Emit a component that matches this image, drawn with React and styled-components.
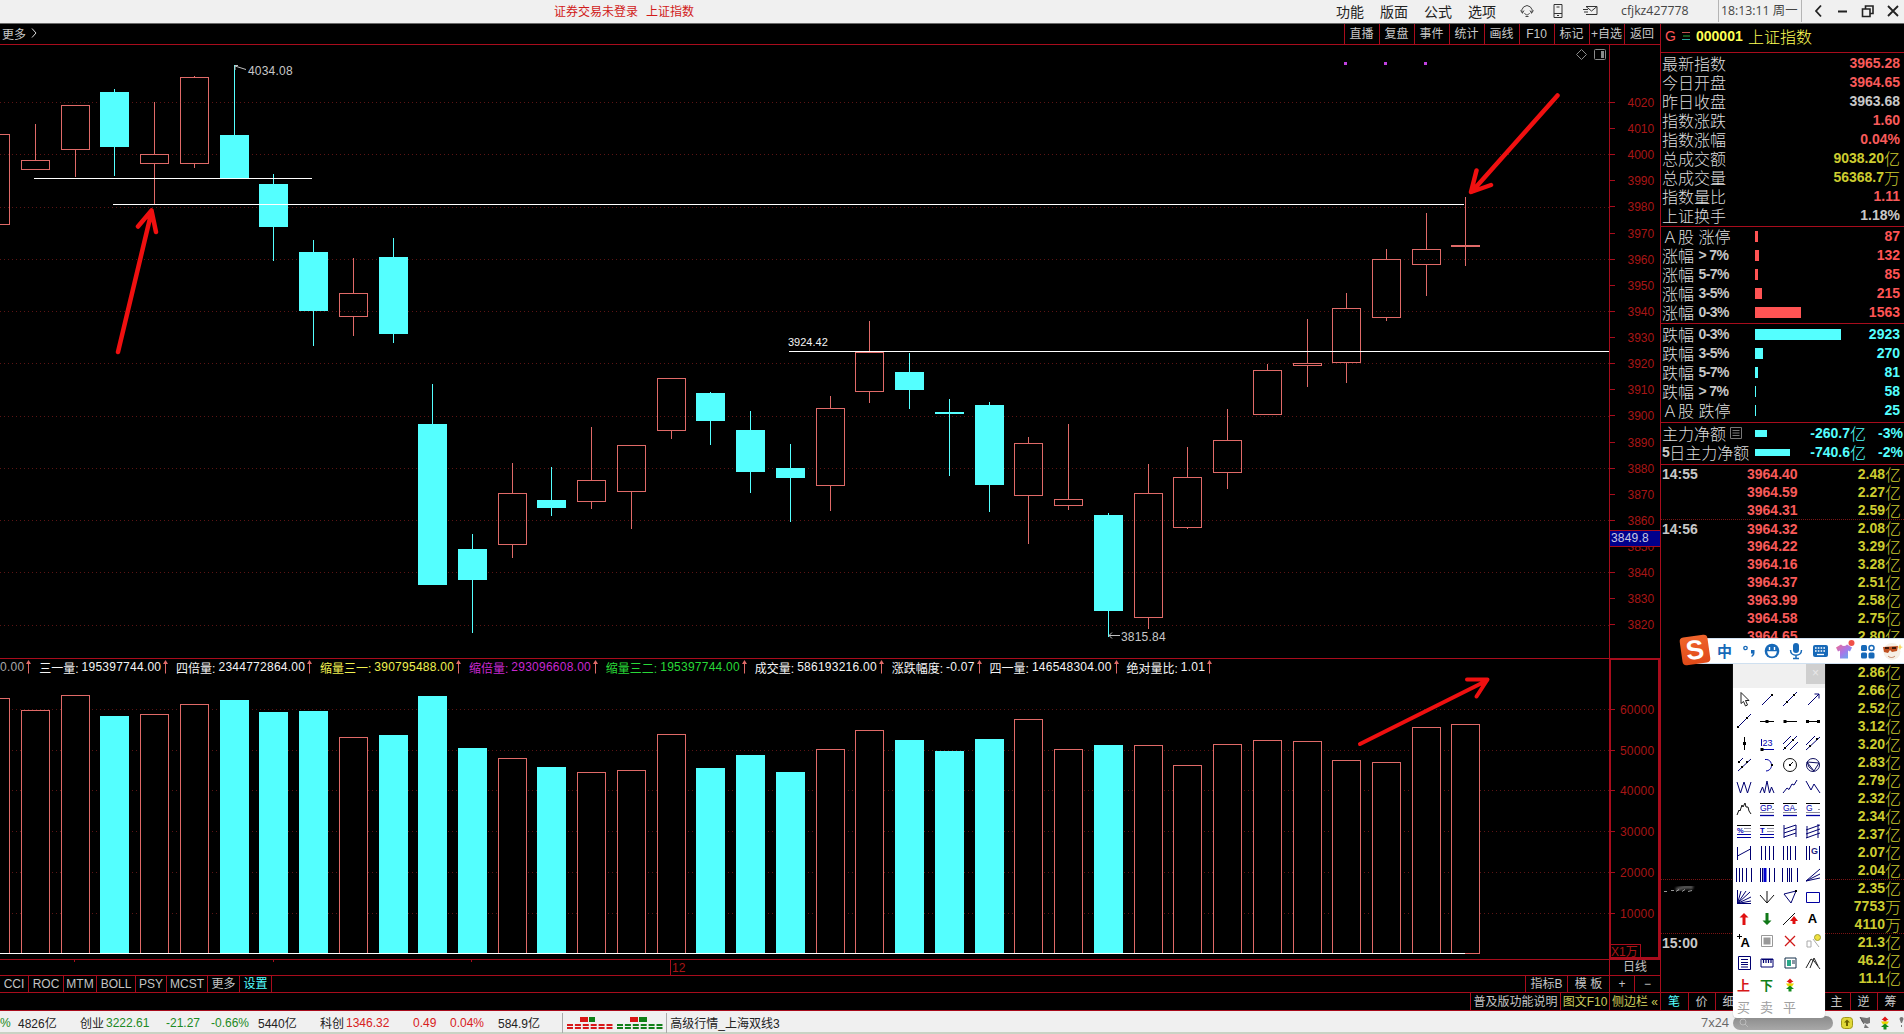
import React from "react";
import styled, { createGlobalStyle } from "styled-components";

const LINE = "#a80c1c";
const UP = "#e06a68";
const CYAN = "#54ffff";
const AXIS = "#a81616";

const GlobalStyle = createGlobalStyle`
  * {
    box-sizing: border-box;
  }
  body {
    margin: 0;
    background: #000;
    overflow: hidden;
    font-family: "Liberation Sans", "Noto Sans CJK SC", sans-serif;
    font-size: 12px;
  }
  svg {
    display: block;
    flex: none;
  }
`;

const Page = styled.div`
  width: 1904px;
  height: 1034px;
  display: flex;
  flex-direction: column;
  position: relative;
  color: #c8c8c8;
  white-space: nowrap;
  overflow: hidden;
`;

/* ---------- title bar ---------- */

const TitleBar = styled.header`
  height: 24px;
  padding-bottom: 2px;
  display: flex;
  align-items: center;
  background: #f0f0f0;
  border-bottom: 1px solid #6a6a6a;
  color: #222;
`;

const Notice = styled.div`
  width: 1336px;
  padding-left: 554px;
  display: flex;
  gap: 8px;
  color: #d01a1a;
`;

const Menu = styled.nav`
  width: 184px;
  display: flex;
  gap: 16px;
  font-size: 14px;
`;

const TitleIcons = styled.div`
  width: 101px;
  display: flex;
  align-items: center;
  gap: 19px;
`;

const Account = styled.div`
  width: 97px;
  font-family: "Open Sans", sans-serif;
  font-size: 12.3px;
  color: #444;
`;

const Clock = styled.div`
  width: 84px;
  height: 22px;
  line-height: 22px;
  padding-left: 2px;
  border-left: 1px solid #b4b4b4;
  border-right: 1px solid #b4b4b4;
  font-family: "Open Sans", "Noto Sans CJK SC", sans-serif;
  font-size: 12.3px;
  color: #444;
`;

/* ---------- left side ---------- */

const Main = styled.main`
  height: 987px;
  display: flex;
`;

const ChartColumn = styled.section`
  width: 1660px;
  display: flex;
  flex-direction: column;
`;

const ToolRow = styled.div`
  height: 21px;
  display: flex;
  align-items: center;
  justify-content: space-between;
  padding-left: 2px;
  border-bottom: 1px solid ${LINE};
`;

const More = styled.div`
  padding-bottom: 2px;
  display: flex;
  align-items: center;
  gap: 5px;
`;

const ToolTabs = styled.div`
  display: flex;
`;

const ToolTab = styled.div`
  width: ${(p) => p.$w || 35}px;
  height: 20px;
  line-height: 20px;
  padding-right: 1px;
  border-left: 1px solid ${LINE};
  text-align: center;
`;

const VolumePanel = styled.div`
  height: 301px;
  display: flex;
  border-top: 1px solid ${LINE};
`;

const VolumeMain = styled.div`
  width: 1609px;
  overflow: hidden;
`;

const Legend = styled.div`
  height: 18px;
  padding-bottom: 2px;
  display: flex;
  align-items: center;
`;

const LegendItem = styled.div`
  display: flex;
  align-items: center;
  color: ${(p) => p.$c || "#f4f4f4"};
`;

const LegendLabel = styled.span`
  width: ${(p) => p.$w}px;
`;

const LegendValue = styled.span`
  letter-spacing: 0.25px;
  margin-right: 2px;
`;

const LegendArrow = styled.svg`
  margin-right: 7.8px;
`;

const BottomRow = styled.div`
  height: ${(p) => p.$h}px;
  display: flex;
  border-top: 1px solid ${LINE};
  border-bottom: ${(p) => (p.$last ? `1px solid ${LINE}` : "none")};
  line-height: ${(p) => p.$h - 1}px;
`;

const Spacer = styled.div`
  flex: 1;
`;

const Cell = styled.div`
  width: ${(p) => p.$w}px;
  text-align: center;
  color: ${(p) => p.$c || "#c4c4c4"};
  border-left: ${(p) => (p.$l ? `1px solid ${LINE}` : "none")};
  border-right: ${(p) => (p.$r ? `1px solid ${LINE}` : "none")};
`;

/* ---------- quote sidebar ---------- */

const Sidebar = styled.aside`
  width: 244px;
  border-left: 1px solid ${LINE};
  display: flex;
  flex-direction: column;
`;

const QuoteTitle = styled.div`
  height: 29px;
  padding: 0 0 4px 4px;
  display: flex;
  align-items: center;
  border-bottom: 1px solid ${LINE};
  color: #ffff54;
  font-size: 16px;
  font-weight: 300;
`;

const GMark = styled.span`
  width: 17px;
  color: #ff5454;
  font-weight: 400;
  font-size: 14px;
`;

const Code = styled.span`
  width: 52px;
  padding-left: 6px;
  margin-right: 6px;
  font-size: 14px;
  font-weight: 700;
`;

const Section = styled.div`
  padding: ${(p) => p.$pad || "0"};
  border-bottom: 1px solid ${LINE};
`;

const Row = styled.div`
  height: 19px;
  padding: 0 4px 0 1px;
  display: flex;
  align-items: center;
`;

const Label = styled.div`
  width: 93px;
  padding-bottom: 1px;
  display: flex;
  align-items: center;
  font-size: 16px;
  font-weight: 300;
  color: #dedede;
  b {
    font-size: 14px;
    font-weight: 700;
    letter-spacing: -0.6px;
    color: #c8c8c8;
  }
`;

const Value = styled.div`
  margin-left: auto;
  padding-bottom: 1px;
  display: flex;
  align-items: center;
  justify-content: flex-end;
  font-size: 14px;
  font-weight: 700;
  color: ${(p) => p.$c};
  i {
    font-size: 16px;
    font-style: normal;
    font-weight: 300;
  }
`;

const Bar = styled.div`
  height: ${(p) => p.$h || 11}px;
  background: ${(p) => p.$c};
`;

const PercentCell = styled.div`
  width: 37px;
  margin-right: -3px;
  padding-bottom: 1px;
  text-align: right;
  font-size: 14px;
  font-weight: 700;
  color: ${CYAN};
`;

const Ticks = styled.div`
  flex: 1;
  overflow: hidden;
`;

const Tick = styled.div`
  height: 18px;
  padding: 0 3px 0 1px;
  display: flex;
  align-items: center;
  border-top: ${(p) => (p.$line ? "1px dotted #7a1414" : "none")};
`;

const Time = styled.div`
  width: 85px;
  font-size: 14px;
  font-weight: 700;
  color: #c8c8c8;
`;

const Price = styled.div`
  font-size: 14px;
  font-weight: 700;
  color: #f85a5a;
`;

const SideTabs = styled.div`
  height: 19px;
  display: flex;
  border-top: 1px solid ${LINE};
  border-bottom: 1px solid ${LINE};
`;

const SideTab = styled.div`
  width: 27px;
  line-height: 18px;
  padding-right: 1px;
  text-align: center;
  color: ${(p) => (p.$on ? CYAN : "#c8c8c8")};
  border-left: ${(p) => (p.$first ? "none" : `1px solid ${LINE}`)};
`;

/* ---------- status bar ---------- */

const StatusBar = styled.footer`
  height: 23px;
  padding-top: 2px;
  display: flex;
  align-items: center;
  background: #f0f0f0;
  border-bottom: 2px solid #c9d3c4;
  color: #222;
`;

const Stat = styled.span`
  width: ${(p) => p.$w}px;
  color: ${(p) => p.$c || "#222"};
`;

const Strength = styled.div`
  width: 105px;
  height: 20px;
  padding: 3px 0 0 3px;
  border-left: 1px solid #aaa;
  border-right: 1px solid #aaa;
`;

const Scope = styled.span`
  width: 32px;
  font-family: "Open Sans", sans-serif;
  font-size: 12.5px;
  color: #666;
`;

const Search = styled.div`
  width: 100px;
  height: 14px;
  margin-right: 8px;
  padding-left: 6px;
  display: flex;
  align-items: center;
  border-radius: 7px;
  background: linear-gradient(#8a8a8a, #a8a8a8);
`;

const Tray = styled.div`
  display: flex;
  align-items: center;
  gap: 6px;
`;

/* ---------- floating windows ---------- */

const ImeBar = styled.div`
  position: absolute;
  left: 1690px;
  top: 638px;
  width: 214px;
  height: 26px;
  padding-left: 26px;
  display: flex;
  align-items: center;
  background: #fff;
  border: 1px solid #cfe0f0;
  border-right: none;
  color: #1769b8;
`;

const ImeLogo = styled.div`
  position: absolute;
  left: -10px;
  top: -3px;
  width: 28px;
  height: 28px;
  line-height: 28px;
  border-radius: 4px;
  transform: rotate(-8deg);
  background: linear-gradient(#f0642c, #e04a18);
  color: #fff;
  font-size: 27px;
  font-weight: 700;
  text-align: center;
`;

const ImeMode = styled.span`
  width: 26px;
  padding-bottom: 2px;
  font-size: 15px;
  font-weight: 700;
`;

const Palette = styled.div`
  position: absolute;
  left: 1733px;
  top: 664px;
  width: 92px;
  height: 354px;
  background: #fff;
  border-radius: 0 0 4px 4px;
  box-shadow: 0 0 1px #999;
`;

const PaletteHead = styled.div`
  height: 24px;
  display: flex;
  justify-content: flex-end;
  background: #f0f0f0;
`;

const PaletteClose = styled.div`
  width: 19px;
  height: 20px;
  line-height: 19px;
  background: #cfcfcf;
  color: #e8e8e8;
  text-align: center;
`;

const PaletteGrid = styled.div`
  display: grid;
  grid-template-columns: repeat(4, 23px);
  grid-auto-rows: 22px;
`;

const Tool = styled.div`
  padding: 0 2px 1px 0;
  display: flex;
  align-items: center;
  justify-content: center;
  font-size: 13px;
  font-weight: ${(p) => (p.$bold ? 700 : 400)};
  color: ${(p) => p.$c || "#000"};
`;

/* ---------- data ---------- */

// [up?, high, top, bottom, low, volume top] in chart rows
const CANDLES = [
  [1, 134, 134, 224, 224, 698],
  [1, 124, 160, 169, 169, 710],
  [1, 105, 105, 149, 177, 695],
  [0, 89, 92, 147, 176, 716],
  [1, 102, 154, 163, 204, 714],
  [1, 76, 77, 163, 168, 704],
  [0, 65, 135, 178, 178, 700],
  [0, 174, 184, 227, 261, 712],
  [0, 240, 252, 311, 346, 711],
  [1, 258, 293, 316, 336, 737],
  [0, 238, 257, 334, 343, 735],
  [0, 384, 424, 585, 585, 696],
  [0, 534, 549, 580, 633, 748],
  [1, 463, 493, 544, 558, 758],
  [0, 467, 500, 508, 516, 767],
  [1, 427, 480, 501, 509, 772],
  [1, 445, 445, 491, 529, 770],
  [1, 378, 378, 430, 439, 734],
  [0, 392, 393, 421, 445, 768],
  [0, 411, 430, 472, 493, 755],
  [0, 444, 468, 478, 522, 772],
  [1, 396, 408, 485, 511, 749],
  [1, 321, 352, 391, 403, 730],
  [0, 353, 372, 390, 409, 740],
  [0, 399, 412, 414, 476, 751],
  [0, 402, 405, 485, 512, 739],
  [1, 437, 443, 495, 544, 719],
  [1, 424, 499, 505, 510, 749],
  [0, 513, 515, 611, 637, 745],
  [1, 464, 493, 617, 629, 745],
  [1, 447, 477, 527, 529, 765],
  [1, 409, 440, 472, 489, 744],
  [1, 364, 370, 414, 414, 740],
  [1, 319, 363, 365, 387, 741],
  [1, 293, 308, 362, 383, 760],
  [1, 249, 259, 317, 321, 762],
  [1, 213, 249, 264, 296, 727],
  [1, 197, 245, 246, 266, 724],
];

const centre = (i) => Math.floor(1465.99 + (i - 37) * 39.74);

const LEGEND = [
  ["三一量:", "195397744.00"],
  ["四倍量:", "2344772864.00"],
  ["缩量三一:", "390795488.00", "#f0f050"],
  ["缩倍量:", "293096608.00", "#c828d0"],
  ["缩量三二:", "195397744.00", "#28d838"],
  ["成交量:", "586193216.00"],
  ["涨跌幅度:", "-0.07"],
  ["四一量:", "146548304.00"],
  ["绝对量比:", "1.01"],
];

const RED = "#f85a5a";
const YELLOW = "#cccc30";

const QUOTES = [
  ["最新指数", "3965.28", RED],
  ["今日开盘", "3964.65", RED],
  ["昨日收盘", "3963.68", "#c8c8c8"],
  ["指数涨跌", "1.60", RED],
  ["指数涨幅", "0.04%", RED],
  ["总成交额", "9038.20亿", YELLOW],
  ["总成交量", "56368.7万", YELLOW],
  ["指数量比", "1.11", RED],
  ["上证换手", "1.18%", "#c8c8c8"],
];

const RISES = [
  ["Ａ股", "涨停", 3, "87"],
  ["涨幅", "> 7%", 4, "132"],
  ["涨幅", "5-7%", 3, "85"],
  ["涨幅", "3-5%", 7, "215"],
  ["涨幅", "0-3%", 46, "1563"],
];

const FALLS = [
  ["跌幅", "0-3%", 86, "2923"],
  ["跌幅", "3-5%", 8, "270"],
  ["跌幅", "5-7%", 3, "81"],
  ["跌幅", "> 7%", 1, "58"],
  ["Ａ股", "跌停", 1, "25"],
];

const PRICES = "3964.40 3964.59 3964.31 3964.32 3964.22 3964.16 3964.37 3963.99 3964.58 3964.65".split(" ");
const AMOUNTS =
  "2.48亿 2.27亿 2.59亿 2.08亿 3.29亿 3.28亿 2.51亿 2.58亿 2.75亿 2.80亿 - 2.86亿 2.66亿 2.52亿 3.12亿 3.20亿 2.83亿 2.79亿 2.32亿 2.34亿 2.37亿 2.07亿 2.04亿 2.35亿 7753万 4110万 21.3亿 46.2亿 11.1亿".split(
    " "
  );
const TIMES = { 0: "14:55", 3: "14:56", 26: "15:00" };
const TICK_LINES = [3, 23, 26];

/* ---------- charts ---------- */

function PriceChart() {
  const grid = Array.from({ length: 11 }, (_, i) => Math.round(102 + i * 52.25));
  const labels = Array.from({ length: 21 }, (_, i) => 4020 - i * 10);
  return (
    <svg width="1660" height="613" viewBox="0 45 1660 613" shapeRendering="crispEdges">
      {grid.map((y) => (
        <path key={y} d={`M0 ${y + 0.5}H1609`} stroke="#5c1414" strokeDasharray="1 3" />
      ))}
      {CANDLES.map(([up, high, top, bottom, low], i) => {
        const c = centre(i);
        if (up) {
          return (
            <path
              key={i}
              d={`M${c + 0.5} ${high}V${top}M${c + 0.5} ${bottom}V${low}M${c - 13.5} ${top + 0.5}h28V${bottom + 0.5}h-28z`}
              fill="none"
              stroke={UP}
            />
          );
        }
        return (
          <g key={i} fill={CYAN}>
            <rect x={c} y={high} width="1" height={low - high} />
            <rect x={c - 14} y={top} width="29" height={bottom - top} />
          </g>
        );
      })}
      <path d="M34 178.5H312M113 204.5H1464M789 351.5H1609" stroke="#fff" />
      <path d="M1609.5 45V658" stroke={LINE} />
      {labels.map((n, i) => {
        const y = Math.round(102 + i * 26.12);
        return (
          <g key={n}>
            <path d={`M1609 ${y + 0.5}h6`} stroke={LINE} />
            <text x="1627.5" y={y + 5} fontSize="12" fill={AXIS}>
              {n}
            </text>
          </g>
        );
      })}
      <rect x="1610" y="530" width="50" height="17" fill="#00008c" />
      <path d="M1610 530.5h50M1610 546.5h50" stroke={LINE} />
      <text x="1611" y="542" fontSize="12" letterSpacing=".2" fill="#c8c8e0">
        3849.8
      </text>
      <g fill="#c040e0">
        <rect x="1344" y="62" width="3" height="3" />
        <rect x="1384" y="62" width="3" height="3" />
        <rect x="1424" y="62" width="3" height="3" />
      </g>
      <g shapeRendering="auto" fill="none" stroke="#8a8a8a">
        <path d="M1581.5 49.5l5 5-5 5-5-5z" />
        <rect x="1594.5" y="49.5" width="11" height="10" rx="1" />
        <path d="M1602.5 51v7" strokeWidth="3" />
      </g>
      <g shapeRendering="auto" fill="none" stroke="#c0c0c0">
        <path d="M246 69.5L235 66M235 70v-4.5h3" />
        <path d="M1120 635.5h-11M1112 632.5l-3 3 3 3" />
      </g>
      <g fill="#c8c8c8">
        <text x="248" y="75" fontSize="12" letterSpacing=".2">4034.08</text>
        <text x="1121" y="641" fontSize="12" letterSpacing=".2">3815.84</text>
        <text x="788" y="346" fontSize="11" fill="#f4f4f4">3924.42</text>
      </g>
      <g shapeRendering="auto" fill="none" stroke="#f01010" strokeWidth="4.5" strokeLinecap="round" strokeLinejoin="round">
        <path d="M118 352L151.5 212M138 226.5L151.5 210.500L156 232" />
        <path d="M1557.5 95.5L1472 191.5M1476.5 170.5L1471 192L1491 185" />
      </g>
    </svg>
  );
}

const VOLUME_ROWS = [709, 750, 790, 831, 872, 913];

function VolumeChart() {
  return (
    <svg width="1609" height="282" viewBox="0 677 1609 282" shapeRendering="crispEdges">
      {VOLUME_ROWS.map((y) => (
        <path key={y} d={`M0 ${y + 0.5}H1609`} stroke="#5c1414" strokeDasharray="1 3" />
      ))}
      {CANDLES.map(([up, , , , , top], i) => {
        const x = centre(i) - 14;
        return up ? (
          <rect key={i} x={x + 0.5} y={top + 0.5} width="28" height={953 - top} fill="#000" stroke={UP} />
        ) : (
          <rect key={i} x={x} y={top} width="29" height={953 - top} fill={CYAN} />
        );
      })}
      <path d="M0 953.5H1465" stroke="#fff" />
      <path
        d="M1360 744L1487 680.5M1467 679.5H1487.5L1476.5 696.5"
        shapeRendering="auto"
        fill="none"
        stroke="#f01010"
        strokeWidth="4"
        strokeLinecap="round"
        strokeLinejoin="round"
      />
    </svg>
  );
}

function VolumeAxis() {
  return (
    <svg width="51" height="300" viewBox="1609 659 51 300" shapeRendering="crispEdges">
      <path d="M1610 659V959M1659 659V959M1609 659H1660M1609 958H1660" stroke={LINE} strokeWidth="2" fill="none" />
      {VOLUME_ROWS.map((y, i) => (
        <g key={y}>
          <path d={`M1611 ${y + 0.5}h4`} stroke={LINE} />
          <text x="1620" y={y + 5} fontSize="12" letterSpacing=".2" fill={AXIS}>
            {60000 - i * 10000}
          </text>
        </g>
      ))}
      <path d="M1611 944.5h29.5V958" stroke={LINE} fill="none" />
      <text x="1611" y="956" fontSize="12" fill={AXIS}>
        X1万
      </text>
    </svg>
  );
}

/* ---------- small icons ---------- */

const NAVY = "#000070";

function Glyph({ d, c = NAVY, dots = [], children }) {
  return (
    <svg width="16" height="16" viewBox="0 0 16 16" fill="none" stroke={c} strokeWidth="1">
      {d && <path d={d} />}
      {dots.map(([x, y]) => (
        <rect key={`${x}-${y}`} x={x - 1} y={y - 1} width="2" height="2" fill="#000" stroke="none" />
      ))}
      {children}
    </svg>
  );
}

function FiboGlyph({ t }) {
  return (
    <Glyph>
      <path d="M1 2.5h14" stroke="#000" />
      <path d="M13 8.5h2M1 11.5h14" stroke="#889" />
      <path d="M1 14.500h14" stroke="#0000a0" strokeWidth="1.300" />
      <text x="1" y="10" fontSize="8.5" fill="#0000b0" stroke="none">
        {t}
      </text>
    </Glyph>
  );
}

function RatioGlyph({ t }) {
  return (
    <Glyph>
      <path d="M1 2.5h14" stroke="#000" />
      <path d="M8 5.5h7M8 8.500h7" stroke="#99a" />
      <path d="M1 11.500h14M1 14.5h14" stroke="#0000a0" />
      <text x="1" y="9.500" fontSize="7.5" fontWeight="700" fill="#0000b0" stroke="none">
        {t}
      </text>
    </Glyph>
  );
}

const UpDown = () => (
  <Glyph c="none">
    <path d="M8 1.500l3.500 3.500h-2v1.500h-3V5h-2z" fill="#e01818" />
    <path d="M4 6.500h8L10 9.500H6z" fill="#e8d800" />
    <path d="M8 8.500l4 3.500H9.500v2.500h-3V12H4z" fill="#138a1c" />
  </Glyph>
);

const TOOLS = [
  <Glyph d="M5 1.500v11l2.500-2 2 4.500 2-1-2-4.500h3.500z" c="#222" />,
  <Glyph d="M3 14L13 4" dots={[[13, 4]]} />,
  <Glyph d="M1 15L15 1" dots={[[5, 11], [12, 4]]} />,
  <Glyph d="M3 14L14 3M9.500 3h4.500v4.500" />,
  <Glyph d="M1 15L15 1" dots={[[2, 14], [11, 5]]} />,
  <Glyph d="M1 8.500h14" c="#000"><path d="M6.500 7h3v3h-3z" fill="#000" stroke="none" /></Glyph>,
  <Glyph d="M2 8.500h13" c="#000"><path d="M1.500 7h3v3h-3z" fill="#000" stroke="none" /></Glyph>,
  <Glyph d="M2 8.500h12" c="#000"><path d="M1 7h3v3H1zM12 7h3v3h-3z" fill="#000" stroke="none" /></Glyph>,
  <Glyph d="M8.500 2v13" c="#000"><path d="M7 7h3v3H7z" fill="#000" stroke="none" /></Glyph>,
  <Glyph d="M2 14.500h13M2.500 4v7" c="#0000a0">
    <path d="M1.500 13h3v3h-3z" fill="#000" stroke="none" />
    <text x="3.500" y="11" fontSize="9" fill="#0000b0" stroke="none">23</text>
  </Glyph>,
  <Glyph d="M1 9L9 1M1 15L15 1M8 15l8-8" dots={[[3, 13], [11, 5]]} />,
  <Glyph d="M1 10L10 1M1 15L15 2" dots={[[5, 11], [12, 4]]} />,
  <Glyph d="M2 6l5-5M2 14L15 2" dots={[[3, 5], [6, 10], [11, 5]]} />,
  <Glyph d="M6 2.500c8-1 9 11 1 11.500" c="#0000a0" dots={[[13, 8]]} />,
  <Glyph d="M8 1.500a6.500 6.500 0 100 13 6.500 6.500 0 100-13M8 8l3-3" c="#111" dots={[[8, 8]]} />,
  <Glyph d="M8 1.500a6.500 6.500 0 100 13 6.500 6.500 0 100-13M2 5l12 1-5 8zM2 5l2 5 5 4" c="#101060" />,
  <Glyph d="M1 3l3.500 11 3.500-11 3.500 11 3.500-11" />,
  <Glyph d="M1 14l2.500-6 2 6L8 2l2.500 12 2-6 2.500 6" />,
  <Glyph d="M1 14l4-5 2 1.500 3-5.500 2 1 3-5" />,
  <Glyph d="M1 2l5 9 3-6 6 9" />,
  <Glyph d="M1 14l2-5 1 1 2-6 1 2 2-4 1 4h2l1 4 2 3" c="#111" />,
  <FiboGlyph t="GP" />,
  <FiboGlyph t="GA" />,
  <FiboGlyph t="G" />,
  <RatioGlyph t="%" />,
  <RatioGlyph t="T" />,
  <Glyph d="M2 2v13M14 2v12M2 6l12-4M2 10l12-4M2 14l12-4" />,
  <Glyph d="M2 3v12M13 1v14M1 7l14-5M1 11l14-5M1 15l14-5" />,
  <Glyph d="M1.500 2v13M14.500 1v14M1.500 11l13-7" />,
  <Glyph d="M2.500 1v14M6.500 1v14M10.500 1v14M14.500 1v14" />,
  <Glyph d="M1.500 1v14M5.500 1v14M8.500 1v14M13.500 1v14" />,
  <Glyph d="M1.500 1v14M4.500 1v14M14.500 1v14">
    <text x="6" y="9" fontSize="9" fontWeight="700" fill="#202080" stroke="none">G</text>
  </Glyph>,
  <Glyph d="M.5 1v14M3.500 1v14M6.500 1v14M10.500 1v14M15.500 1v14" />,
  <Glyph d="M1.500 1v14M3.500 1v14M10.500 1v14M15.500 1v14">
    <path d="M6 1v14" stroke="#0000d0" strokeWidth="3" />
  </Glyph>,
  <Glyph d="M.5 1v14M5.500 1v14M7.500 1v14M9.500 1v14M15.500 1v14" />,
  <Glyph d="M1 14L15 2M1 14l14-7M1 14l14-3" />,
  <Glyph d="M1.500 1v13.500H15M1.500 14.500L5 2M1.500 14.500L10 2M1.500 14.500L14 3M1.500 14.500L15 8M1.500 14.500L15 12" />,
  <Glyph d="M1 6l7 8 7-8M8 2v12" c="#111" />,
  <Glyph d="M2 5l12-3-5 12z" dots={[[14, 2]]} />,
  <Glyph d="M1.500 3.500h13v10h-13z" c="#0000a0" />,
  <Glyph c="none"><path d="M8 2l4.500 4.500h-3V14h-3V6.500h-3z" fill="#e01010" /></Glyph>,
  <Glyph c="none"><path d="M8 14L3.500 9.500h3V2h3v7.500h3z" fill="#107818" /></Glyph>,
  <Glyph d="M1 14L13 2" c="#111"><path d="M12 5l4 5h-2.500v3h-3v-3H8z" fill="#e01010" stroke="none" /></Glyph>,
  "A",
  <Glyph d="M1 3.500h5M3.500 1v5" c="#000">
    <text x="4.500" y="14" fontSize="13" fontWeight="700" fill="#000" stroke="none">A</text>
  </Glyph>,
  <Glyph d="M2.500 2.500h11v11h-11z" c="#999"><path d="M4.500 4.500h7v7h-7z" fill="#999" stroke="none" /></Glyph>,
  <Glyph c="#d01818"><path d="M3 3l10 10M13 3L3 13" strokeWidth="1.300" /></Glyph>,
  <Glyph d="M2 8h4v6H2zM8 6l6 8" c="#aaa"><circle cx="12.500" cy="4.500" r="3" fill="#f0e040" stroke="#a0a030" /></Glyph>,
  <Glyph d="M2.500 1.500h12v13h-12zM5 4.500h7M5 7.500h7M5 9.500h7M5 12h7" />,
  <Glyph d="M2 4h12v8H2z"><path d="M3 4.500h11M4.500 5v3M7 5v3M9.500 5v3M12 5v3" strokeWidth="1.200" /></Glyph>,
  <Glyph d="M3 3h11v10H3z" c="#14304a"><path d="M5 5h4v6H5z" fill="#28a888" stroke="none" /><path d="M10 6h3M10 8h3" /></Glyph>,
  <Glyph d="M1 13l5-9 3 2 6 8M5 13l4-10 4 8" c="#222" />,
  "上",
  "下",
  <UpDown />,
  "",
  "买",
  "卖",
  "平",
];

const TOOL_COLORS = { 上: "#d81818", 下: "#108018", 买: "#a0a0a0", 卖: "#a0a0a0", 平: "#a0a0a0" };

/* ---------- parts ---------- */

const splitUnit = (s) => [s.replace(/[亿万]/, ""), (s.match(/[亿万]/) || [""])[0]];

function Amount({ text, color }) {
  const [n, unit] = splitUnit(text);
  return (
    <Value $c={color}>
      {n}
      {unit && <i>{unit}</i>}
    </Value>
  );
}

function BreadthRow({ row, color }) {
  const [name, range, size, count] = row;
  return (
    <Row>
      <Label>
        {name}&nbsp;{range.includes("停") ? range : <b>{range}</b>}
      </Label>
      <Bar $c={color} style={{ width: size }} />
      <Amount text={count} color={color} />
    </Row>
  );
}

function TopBar() {
  return (
    <TitleBar>
      <Notice>
        <span>证券交易未登录</span>
        <span>上证指数</span>
      </Notice>
      <Menu>
        <span>功能</span>
        <span>版面</span>
        <span>公式</span>
        <span>选项</span>
      </Menu>
      <TitleIcons>
        <svg width="14" height="14" viewBox="0 0 14 14" fill="none" stroke="#444">
          <path d="M2.500 9.500a5.200 5.200 0 119 0M.500 6.500L2.500 9l1.500-2.500M13.500 6.500L11.500 9 10 6.500M4.500 9c1 2.500 4 2.500 5 0M8.500 12.500h-3" />
        </svg>
        <svg width="10" height="14" viewBox="0 0 10 14" fill="none" stroke="#333">
          <path d="M1 .5h8v13H1zM1 9.500h8M4 11.500h2M3.500 3h3" />
        </svg>
        <svg width="16" height="12" viewBox="0 0 16 12" fill="none" stroke="#333">
          <path d="M4 1.500h11v8H5M4 1.500l5.500 4.500L15 1.500M1 4.500h5M2 7h4M4 9.500h3" />
        </svg>
      </TitleIcons>
      <Account>cfjkz427778</Account>
      <Clock>18:13:11 周一</Clock>
      <svg width="102" height="16" viewBox="0 0 102 16" fill="none" stroke="#222" strokeWidth="1.8">
        <path d="M19 2.500L14 8l5 5.500M36 8.500h9M86 3l10 10M96 3L86 13" />
        <path d="M60.500 6h7.500v7.500h-7.500zM63.500 6V3h7.500v7.500h-3" strokeWidth="1.6" />
      </svg>
    </TitleBar>
  );
}

function VolumeLegend() {
  const arrow = (
    <LegendArrow width="5" height="14" viewBox="0 0 5 14" fill={UP}>
      <path d="M2.500 0L5 4H3v9.500H2V4H0z" />
    </LegendArrow>
  );
  return (
    <Legend>
      <LegendItem $c="#a8a8a8">
        <LegendValue>0.00</LegendValue>
        {arrow}
      </LegendItem>
      {LEGEND.map(([label, value, color]) => (
        <LegendItem key={label} $c={color}>
          <LegendLabel $w={(label.length - 1) * 12 + 6.4}>{label}</LegendLabel>
          <LegendValue>{value}</LegendValue>
          {arrow}
        </LegendItem>
      ))}
    </Legend>
  );
}

function Smudge() {
  return (
    <svg width="34" height="12" viewBox="0 0 34 12" fill="none" stroke="#bbb">
      <defs>
        <filter id="soft">
          <feGaussianBlur stdDeviation=".8" />
        </filter>
      </defs>
      <path d="M14 7c5-2 11-5 17-2" strokeWidth="4" opacity=".45" filter="url(#soft)" />
      <path d="M2 8.500h3M9 7.500h3M14 8.500l3-2M20 8.500l3-2M26 8.500l4-1" opacity=".8" />
    </svg>
  );
}

function Quotes() {
  return (
    <Sidebar>
      <QuoteTitle>
        <GMark>G</GMark>
        <svg width="8" height="10" viewBox="0 0 8 10" strokeWidth="1">
          <path d="M0 1.500h8" stroke="#c05050" />
          <path d="M1 5h7" stroke="#28a838" />
          <path d="M0 8.500h8" stroke="#28a8a0" />
        </svg>
        <Code>000001</Code>
        上证指数
      </QuoteTitle>
      <Section $pad="1px 0">
        {QUOTES.map(([name, value, color]) => (
          <Row key={name}>
            <Label>{name}</Label>
            <Amount text={value} color={color} />
          </Row>
        ))}
      </Section>
      <Section $pad="0 0 1px">
        {RISES.map((r) => (
          <BreadthRow key={r[3]} row={r} color="#ff5454" />
        ))}
      </Section>
      <Section $pad="1px 0 2px">
        {FALLS.map((r) => (
          <BreadthRow key={r[3]} row={r} color={CYAN} />
        ))}
      </Section>
      <Section $pad="1px 0 2px">
        <Row>
          <Label>
            主力净额
            <svg width="16" height="14" viewBox="0 0 16 14" fill="none" stroke="#777">
              <path d="M4.500 1.500h11v11h-11zM6.500 4.500h7M6.500 7h7M6.500 9.500h7" />
            </svg>
          </Label>
          <Bar $c={CYAN} $h={7} style={{ width: 12 }} />
          <Amount text="-260.7亿" color={CYAN} />
          <PercentCell>-3%</PercentCell>
        </Row>
        <Row>
          <Label>
            <b>5</b>日主力净额
          </Label>
          <Bar $c={CYAN} $h={7} style={{ width: 35 }} />
          <Amount text="-740.6亿" color={CYAN} />
          <PercentCell>-2%</PercentCell>
        </Row>
      </Section>
      <Ticks>
        {AMOUNTS.map((a, i) => (
          <Tick key={i} $line={TICK_LINES.includes(i)}>
            <Time>{i === 23 ? <Smudge /> : TIMES[i]}</Time>
            <Price>{PRICES[i]}</Price>
            {a !== "-" && <Amount text={a} color={YELLOW} />}
          </Tick>
        ))}
      </Ticks>
      <SideTabs>
        {["笔", "价", "细", "", "", "", "主", "逆", "筹"].map((t, i) => (
          <SideTab key={i} $on={i === 0} $first={i === 0}>
            {t}
          </SideTab>
        ))}
      </SideTabs>
    </Sidebar>
  );
}

function StrengthMeter() {
  const six = [0, 1, 2, 3, 4, 5];
  return (
    <Strength>
      <svg width="100" height="14" viewBox="0 0 100 14">
        <path d="M14 1h8v5h-8zM64 1h8v5h-8z" fill="#d81818" />
        <path d="M23 1h6v5h-6zM73 1h8v5h-8z" fill="#108018" />
        {six.map((i) => (
          <path key={i} d={`M${1 + i * 7.9} 8h6v2h-6zM${1 + i * 7.9} 11h6v2h-6z`} fill="#d81818" />
        ))}
        {six.map((i) => (
          <path key={i} d={`M${51 + i * 7.9} 8h6v2h-6zM${51 + i * 7.9} 11h6v2h-6z`} fill="#108018" />
        ))}
      </svg>
    </Strength>
  );
}

function Status() {
  const green = "#1c8a24";
  const red = "#d82020";
  return (
    <StatusBar>
      <Stat $w={18} $c={green}>%</Stat>
      <Stat $w={62}>4826亿</Stat>
      <Stat $w={26}>创业</Stat>
      <Stat $w={60} $c={green}>3222.61</Stat>
      <Stat $w={45} $c={green}>-21.27</Stat>
      <Stat $w={47} $c={green}>-0.66%</Stat>
      <Stat $w={62}>5440亿</Stat>
      <Stat $w={26}>科创</Stat>
      <Stat $w={67} $c={red}>1346.32</Stat>
      <Stat $w={37} $c={red}>0.49</Stat>
      <Stat $w={48} $c={red}>0.04%</Stat>
      <Stat $w={64}>584.9亿</Stat>
      <StrengthMeter />
      <Stat $w={1034}>&nbsp;高级行情_上海双线3</Stat>
      <Scope>7x24</Scope>
      <Search>
        <svg width="9" height="9" viewBox="0 0 9 9" fill="none" stroke="#bbb">
          <path d="M4 1a3 3 0 100 6 3 3 0 100-6M6 6l3 3" />
        </svg>
      </Search>
      <Tray>
        <svg width="12" height="12" viewBox="0 0 12 12">
          <rect x=".5" y=".5" width="11" height="11" rx="3" fill="#e0d838" stroke="#a09818" />
          <path d="M6 2.500l3 3H7V9H5V5.500H3z" fill="#6a6000" />
        </svg>
        <svg width="12" height="13" viewBox="0 0 12 13" fill="#777">
          <path d="M1 1l7 1 3-1v6l-3 1-5-2zM6 8l4 4H5z" />
          <path d="M1 1l4 7" stroke="#555" />
        </svg>
        <UpDown />
        <svg width="5" height="12" viewBox="0 0 5 12" fill="#777">
          <path d="M2.500 0a2 2 0 012 2L3 6H2L.5 2a2 2 0 012-2zM2 8h1v2H2z" />
        </svg>
      </Tray>
    </StatusBar>
  );
}

function Ime() {
  return (
    <ImeBar>
      <ImeLogo>S</ImeLogo>
      <ImeMode>中</ImeMode>
      <svg width="160" height="24" viewBox="0 0 160 24" fill="#1769b8">
        <circle cx="2.500" cy="9" r="1.700" fill="none" stroke="#1769b8" strokeWidth="1.3" />
        <path d="M8 11h3.500v3c0 2-1.500 3.500-3 4v-1.500c1-.5 1.200-1.500 1.200-2H8z" />
        <circle cx="29" cy="12" r="7.300" />
        <path d="M26.500 8v3M31.500 8v3M25 13c1 5 7 5 8 0z" stroke="#fff" strokeWidth="1.4" fill="#fff" />
        <rect x="50" y="4" width="6" height="10" rx="3" />
        <path d="M47.500 11c0 7 11 7 11 0M53 16v3.500M50 19.500h6" fill="none" stroke="#1769b8" strokeWidth="1.5" />
        <rect x="70" y="6" width="15" height="12" rx="2" />
        <path d="M72 9h11M72 12h11" stroke="#fff" strokeWidth="1.5" strokeDasharray="1.6 1.2" />
        <path d="M74 15.500h7" stroke="#fff" strokeWidth="1.3" />
        <defs>
          <linearGradient id="shirt" x1="0" y1="0" x2="1" y2="1">
            <stop offset="0" stopColor="#f06890" />
            <stop offset=".5" stopColor="#a878e8" />
            <stop offset="1" stopColor="#50b8f0" />
          </linearGradient>
        </defs>
        <path d="M98 5.500c2 2 4 2 6 0l5 3-2 4-2-1v8h-8v-8l-2 1-2-4z" fill="url(#shirt)" />
        <circle cx="108.500" cy="4" r="3" fill="#f05048" />
        <rect x="118" y="6" width="6" height="6" rx="1.500" />
        <circle cx="128.500" cy="9" r="2.500" fill="none" stroke="#1769b8" strokeWidth="1.5" />
        <rect x="118" y="13.500" width="6" height="6" rx="1.500" />
        <rect x="125.500" y="13.500" width="6" height="6" rx="1.500" />
        <circle cx="149" cy="12.500" r="8.500" fill="#f6f0e6" />
        <path d="M140 8l15-1-1 5-5 1-2-2-2 3-4-1z" fill="#c05020" />
        <path d="M142 9h4M149 9h4" stroke="#401808" strokeWidth="2" />
        <path d="M145 17c2 2 5 2 7 0" stroke="#c08060" fill="none" />
        <path d="M157 5l1 2.500 2 .5-2 1-1 2-1-2-1-1 1-.5z" fill="#f8d860" />
      </svg>
    </ImeBar>
  );
}

function DrawingPalette() {
  return (
    <Palette>
      <PaletteHead>
        <PaletteClose>×</PaletteClose>
      </PaletteHead>
      <PaletteGrid>
        {TOOLS.map((tool, i) => (
          <Tool key={i} $bold={["A", "上", "下"].includes(tool)} $c={TOOL_COLORS[tool]}>
            {tool}
          </Tool>
        ))}
      </PaletteGrid>
    </Palette>
  );
}

function App() {
  return (
    <Page>
      <GlobalStyle />
      <TopBar />
      <Main>
        <ChartColumn>
          <ToolRow>
            <More>
              更多
              <svg width="6" height="10" viewBox="0 0 6 10" fill="none" stroke="#d8d8d8">
                <path d="M1 .5L5 5 1 9.500" />
              </svg>
            </More>
            <ToolTabs>
              {["直播", "复盘", "事件", "统计", "画线", "F10", "标记", "+自选"].map((t) => (
                <ToolTab key={t}>{t}</ToolTab>
              ))}
              <ToolTab $w={36}>返回</ToolTab>
            </ToolTabs>
          </ToolRow>
          <PriceChart />
          <VolumePanel>
            <VolumeMain>
              <VolumeLegend />
              <VolumeChart />
            </VolumeMain>
            <VolumeAxis />
          </VolumePanel>
          <BottomRow $h={16}>
            <svg width="1609" height="15" viewBox="0 0 1609 15" shapeRendering="crispEdges">
              <path d="M74.500 0v2M273.500 0v2M471.500 0v2M670.500 0v15" stroke={LINE} />
              <text x="672" y="12" fontSize="12" fill={AXIS}>12</text>
            </svg>
            <Cell $w={51} $l>日线</Cell>
          </BottomRow>
          <BottomRow $h={17}>
            <Cell $w={29} $r>CCI</Cell>
            <Cell $w={35} $r>ROC</Cell>
            <Cell $w={33} $r>MTM</Cell>
            <Cell $w={39} $r>BOLL</Cell>
            <Cell $w={31} $r>PSY</Cell>
            <Cell $w={41} $r>MCST</Cell>
            <Cell $w={32} $r>更多</Cell>
            <Cell $w={32} $r $c={CYAN}>设置</Cell>
            <Spacer />
            <Cell $w={42} $l>指标B</Cell>
            <Cell $w={42} $l>模 板</Cell>
            <Cell $w={25} $l>+</Cell>
            <Cell $w={26} $l>−</Cell>
          </BottomRow>
          <BottomRow $h={19} $last>
            <Spacer />
            <Cell $w={90} $l>普及版功能说明</Cell>
            <Cell $w={49} $l $c="#cccc5c">图文F10</Cell>
            <Cell $w={51} $l $c="#cccc5c">侧边栏 «</Cell>
          </BottomRow>
        </ChartColumn>
        <Quotes />
      </Main>
      <Status />
      <DrawingPalette />
      <Ime />
    </Page>
  );
}

export default App;
